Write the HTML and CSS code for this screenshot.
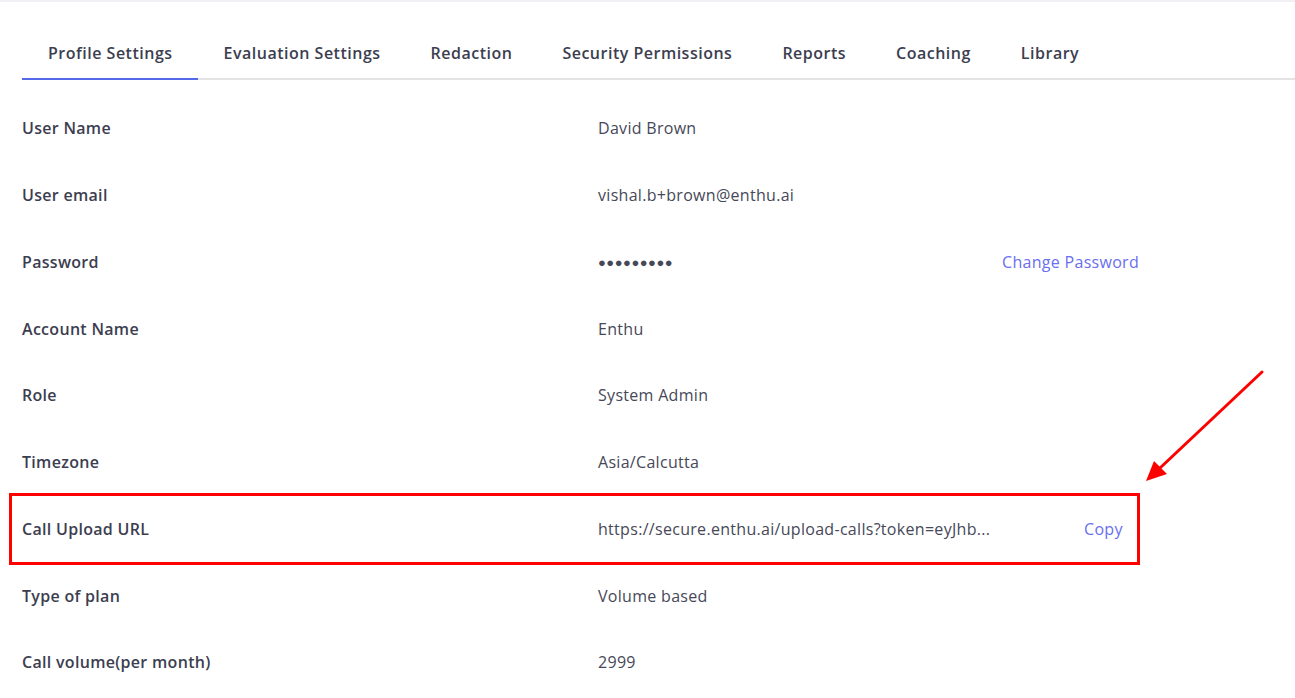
FILE: index.html
```
<!DOCTYPE html>
<html>
<head>
	<title>Profile Settings</title>
	<meta charset="utf-8">
	<link rel="stylesheet" href="styles.css">
</head>
<body>
	<section class="page">
		<nav class="tabs">
			<a class="tab active">Profile Settings</a>
			<a class="tab">Evaluation Settings</a>
			<a class="tab">Redaction</a>
			<a class="tab">Security Permissions</a>
			<a class="tab">Reports</a>
			<a class="tab">Coaching</a>
			<a class="tab">Library</a>
		</nav>

		<div class="rows">
			<div class="row">
				<span class="label">User Name</span>
				<span class="value">David Brown</span>
			</div>
			<div class="row">
				<span class="label">User email</span>
				<span class="value">vishal.b+brown@enthu.ai</span>
			</div>
			<div class="row">
				<span class="label">Password</span>
				<span class="value dots">&#9679;&#9679;&#9679;&#9679;&#9679;&#9679;&#9679;&#9679;&#9679;</span>
				<a class="action">Change Password</a>
			</div>
			<div class="row">
				<span class="label">Account Name</span>
				<span class="value">Enthu</span>
			</div>
			<div class="row">
				<span class="label">Role</span>
				<span class="value">System Admin</span>
			</div>
			<div class="row">
				<span class="label">Timezone</span>
				<span class="value">Asia/Calcutta</span>
			</div>
			<div class="row highlighted">
				<span class="label">Call Upload URL</span>
				<span class="value url">https://secure.enthu.ai/upload-calls?token=eyJhb...</span>
				<a class="action copy">Copy</a>
			</div>
			<div class="row">
				<span class="label">Type of plan</span>
				<span class="value">Volume based</span>
			</div>
			<div class="row">
				<span class="label">Call volume(per month)</span>
				<span class="value">2999</span>
			</div>
		</div>

		<svg class="arrow" width="140" height="125" viewBox="0 0 140 125">
			<line x1="122" y1="8" x2="20" y2="104" stroke="#ff0000" stroke-width="3" stroke-linecap="round"/>
			<polygon points="6,117 14,97 27,110" fill="#ff0000"/>
		</svg>
	</section>
</body>
</html>
```

FILE: styles.css
```
html, body {
	margin: 0;
	padding: 0;
	height: 100%;
}

body {
	font-family: "Open Sans", "Noto Sans", sans-serif;
	font-size: 16px;
	letter-spacing: 0.3px;
	color: #3c3e50;
	background-color: white;
	border-top: 2px solid #f1f1f5;
}

a {
	cursor: pointer;
}

.page {
	position: relative;
	padding: 0 0 0 22px;
}

.tabs {
	display: flex;
	border-bottom: 2px solid #e3e3e6;
	padding-top: 39px;
}

.tab {
	display: block;
	padding: 0 24px 13px 26px;
	line-height: 24px;
	font-weight: 600;
	letter-spacing: 0.5px;
	color: #3c3e50;
	margin-bottom: -2px;
	border-bottom: 2px solid transparent;
}
.tab.active {
	padding-right: 25px;
	border-bottom-color: #5468e8;
}

.rows {
	padding-top: 15px;
}

.row {
	display: flex;
	align-items: center;
	height: 66.75px;
}

/* annotation box drawn around the upload url row */
.row.highlighted {
	width: 1105px;
	outline: 3px solid #ff0000;
	outline-offset: 10px;
	height: 46px;
	margin: 10.375px 0;
}

.label {
	flex-shrink: 0;
	width: 576px;
	font-weight: 600;
	color: #3c3e50;
}

.value {
	flex-shrink: 0;
	width: 404px;
	color: #464858;
}

.dots {
	font-size: 13px;
	letter-spacing: 0.5px;
}

.url {
	width: 486px;
	white-space: nowrap;
}

.action {
	white-space: nowrap;
	color: #6a6ef0;
}

.arrow {
	position: absolute;
	left: 1140px;
	top: 362px;
}
```
